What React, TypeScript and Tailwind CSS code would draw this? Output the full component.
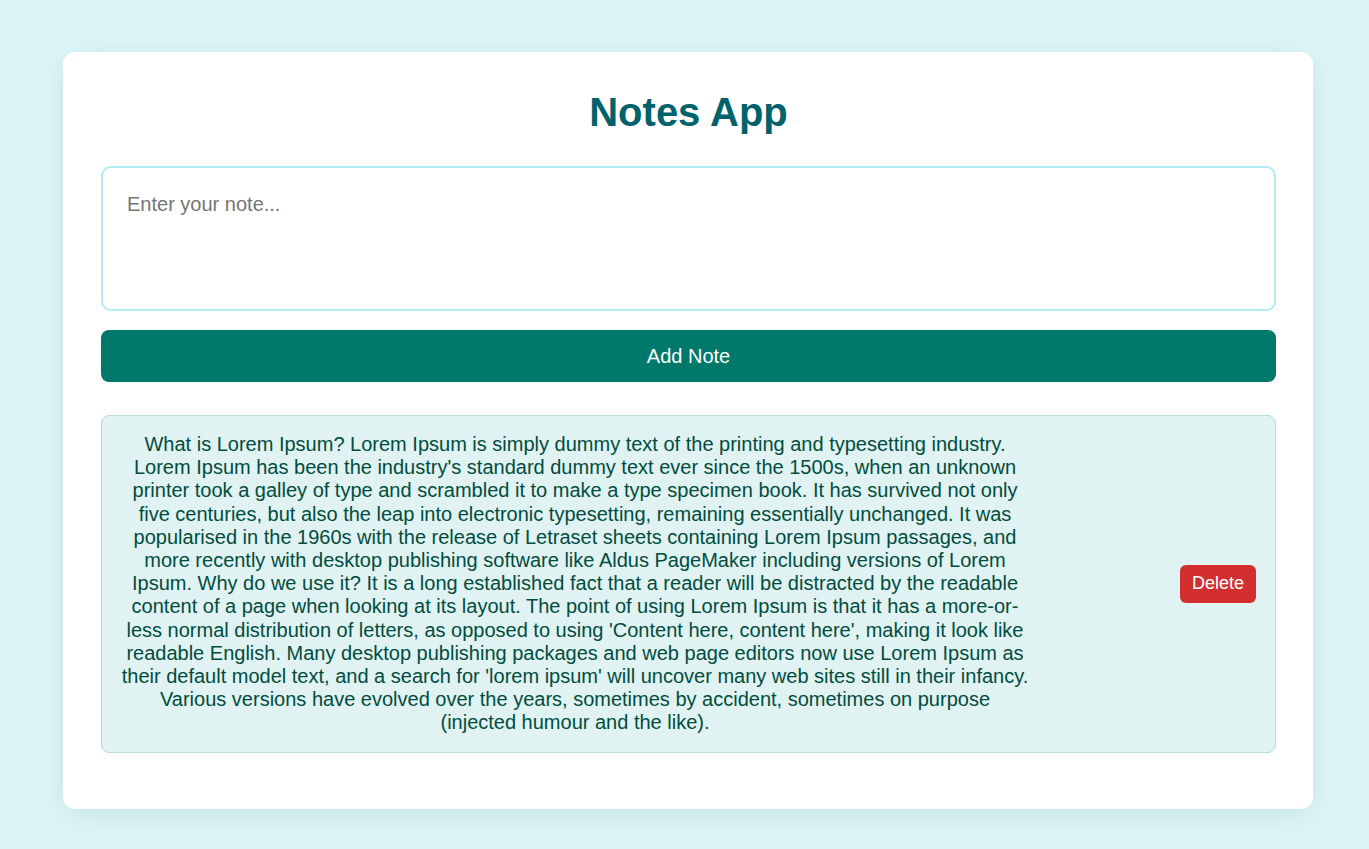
import React, { useState } from 'react';

const LOREM =
  "What is Lorem Ipsum? Lorem Ipsum is simply dummy text of the printing and typesetting industry. Lorem Ipsum has been the industry's standard dummy text ever since the 1500s, when an unknown printer took a galley of type and scrambled it to make a type specimen book. It has survived not only five centuries, but also the leap into electronic typesetting, remaining essentially unchanged. It was popularised in the 1960s with the release of Letraset sheets containing Lorem Ipsum passages, and more recently with desktop publishing software like Aldus PageMaker including versions of Lorem Ipsum. Why do we use it? It is a long established fact that a reader will be distracted by the readable content of a page when looking at its layout. The point of using Lorem Ipsum is that it has a more-or-less normal distribution of letters, as opposed to using 'Content here, content here', making it look like readable English. Many desktop publishing packages and web page editors now use Lorem Ipsum as their default model text, and a search for 'lorem ipsum' will uncover many web sites still in their infancy. Various versions have evolved over the years, sometimes by accident, sometimes on purpose (injected humour and the like).";

export default function App() {
  const [text, setText] = useState('');
  const [notes, setNotes] = useState<string[]>([LOREM]);

  const addNote = () => {
    if (!text.trim()) return;
    setNotes([...notes, text]);
    setText('');
  };

  return (
    <div className="min-h-screen bg-[#def5f8] pt-[52px] pb-10 font-['Liberation_Sans',Arial,sans-serif]">
      <div className="ml-[63px] w-[1250px] rounded-xl bg-white pl-[38px] pr-[37px] pt-[36px] pb-[56px] shadow-[0_6px_28px_rgba(0,96,100,0.12)]">
        <h1 className="mb-[30px] text-center text-[40px] font-bold leading-[48px] text-[#00626a]">
          Notes App
        </h1>
        <textarea
          value={text}
          onChange={(e) => setText(e.target.value)}
          placeholder="Enter your note..."
          className="block h-[145px] w-full resize-none rounded-[10px] border-2 border-[#b2ebf2] px-[24px] pt-[25px] pb-[24px] text-[20px] leading-[23px] text-[#333] placeholder:text-[#757575] outline-none"
        />
        <button
          onClick={addNote}
          className="mt-[19px] block h-[52px] w-full rounded-lg bg-[#00796b] text-[20px] text-white"
        >
          Add Note
        </button>
        <div className="mt-[33px] flex flex-col gap-4">
          {notes.map((n, i) => (
            <div
              key={i}
              className="flex items-center justify-between rounded-lg border border-[#b2dfdb] bg-[#e0f2f1] pt-[17px] pb-[17px] pl-[19px] pr-[19px]"
            >
              <p className="w-[908px] text-center text-[20px] leading-[23.2px] text-[#004d40]">{n}</p>
              <button
                onClick={() => setNotes(notes.filter((_, j) => j !== i))}
                className="h-[38px] rounded-md bg-[#d32f2f] px-3 text-[18px] text-white"
              >
                Delete
              </button>
            </div>
          ))}
        </div>
      </div>
    </div>
  );
}
